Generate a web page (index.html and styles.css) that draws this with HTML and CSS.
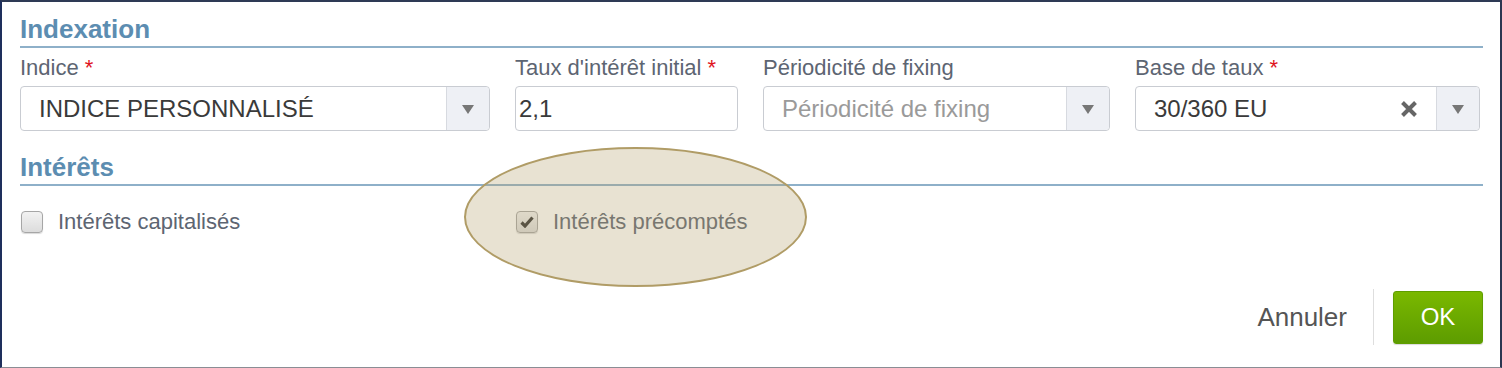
FILE: index.html
```html
<!DOCTYPE html>
<html lang="fr">
<head>
<meta charset="utf-8">
<title>Indexation</title>
<link rel="stylesheet" href="styles.css">
</head>
<body>
<div class="frame">
  <section class="section">
    <h2 class="section-title">Indexation</h2>
    <div class="fields">
      <div class="field">
        <label class="label">Indice <span class="req">*</span></label>
        <div class="select">
          <span class="value">INDICE PERSONNALISÉ</span>
          <span class="arrow"><span class="tri"></span></span>
        </div>
      </div>
      <div class="field">
        <label class="label">Taux d'intérêt initial <span class="req">*</span></label>
        <div class="input"><span class="value">2,1</span></div>
      </div>
      <div class="field">
        <label class="label">Périodicité de fixing</label>
        <div class="select">
          <span class="value placeholder">Périodicité de fixing</span>
          <span class="arrow"><span class="tri"></span></span>
        </div>
      </div>
      <div class="field">
        <label class="label">Base de taux <span class="req">*</span></label>
        <div class="select">
          <span class="value">30/360 EU</span>
          <span class="clear">
            <svg width="18" height="18" viewBox="0 0 18 18"><path d="M2.5 2.5 L15.5 15.5 M15.5 2.5 L2.5 15.5" stroke="#666" stroke-width="4" stroke-linecap="butt"/></svg>
          </span>
          <span class="arrow"><span class="tri"></span></span>
        </div>
      </div>
    </div>
  </section>
  <section class="section second">
    <h2 class="section-title">Intérêts</h2>
    <div class="checks">
      <div class="check">
        <span class="box"></span>
        <span class="check-label">Intérêts capitalisés</span>
      </div>
      <div class="check">
        <span class="box checked">
          <svg width="14" height="12" viewBox="0 0 14 12"><path d="M1.5 6.5 L5 10 L12.5 1.5" fill="none" stroke="#333" stroke-width="3.2"/></svg>
        </span>
        <span class="check-label">Intérêts précomptés</span>
      </div>
    </div>
  </section>
  <div class="actions">
    <button class="btn-cancel">Annuler</button>
    <span class="sep"></span>
    <button class="btn-ok">OK</button>
  </div>
  <div class="highlight"></div>
</div>
</body>
</html>
```
FILE: styles.css
```css
html, body { margin: 0; padding: 0; background: #fff; }
body { font-family: "Liberation Sans", Arial, sans-serif; }
.frame {
  position: relative;
  box-sizing: border-box;
  width: 1502px;
  height: 368px;
  border-left: 2px solid #1e2f5c;
  border-right: 2px solid #2b3651;
  border-top: 2px solid #2e3a55;
  border-bottom: 1px solid #8a8d94;
  padding: 12px 17px 0 18px;
}
.section-title {
  margin: 0;
  font-size: 26px;
  font-weight: bold;
  color: #5c8db1;
  line-height: 30px;
  padding-bottom: 2px;
  border-bottom: 2px solid #8eb0c9;
  position: relative;
  z-index: 2;
}
.fields {
  display: grid;
  grid-template-columns: 470px 223px 347px 345px;
  column-gap: 25px;
  margin-top: 7px;
}
.label {
  display: block;
  font-size: 22px;
  color: #5d6572;
  line-height: 26px;
  margin-bottom: 5px;
}
.req { color: #e0141e; }
.select, .input {
  box-sizing: border-box;
  height: 45px;
  border: 1px solid #c9ccd2;
  border-radius: 4px;
  display: flex;
  align-items: center;
  background: #fff;
}
.value {
  flex: 1;
  font-size: 24px;
  color: #3a3a3a;
  padding-left: 18px;
  white-space: nowrap;
}
.input .value { padding-left: 3px; }
.placeholder { color: #9a9a9a; }
.arrow {
  width: 42px;
  align-self: stretch;
  background: #eef0f5;
  border-left: 1px solid #d7dae0;
  border-radius: 0 4px 4px 0;
  display: flex;
  align-items: center;
  justify-content: center;
}
.tri {
  width: 0; height: 0;
  border-left: 6px solid transparent;
  border-right: 6px solid transparent;
  border-top: 9px solid #777;
  margin-top: 2px;
}
.clear {
  width: 20px;
  margin-right: 16px;
  display: flex;
  align-items: center;
}
.second { margin-top: 21px; }
.checks {
  display: flex;
  margin-top: 23px;
  position: relative;
  z-index: 2;
}
.check {
  display: flex;
  align-items: center;
  width: 495px;
}
.box {
  box-sizing: border-box;
  width: 22px; height: 22px;
  border: 1px solid #a6a6a6;
  border-radius: 4px;
  background: linear-gradient(#f2f2f2, #dcdcdc);
  box-shadow: 0 1px 1px rgba(0,0,0,0.15);
  margin-left: 1px;
  margin-right: 15px;
  display: flex;
  align-items: center;
  justify-content: center;
}
.check-label {
  font-size: 22px;
  line-height: 26px;
  color: #5d6572;
}
.actions {
  position: absolute;
  right: 17px;
  bottom: 22px;
  display: flex;
  align-items: center;
}
.btn-cancel {
  font-family: inherit;
  font-size: 26px;
  color: #555;
  background: none;
  border: none;
  padding: 0;
  margin-right: 26px;
}
.sep {
  width: 1px;
  height: 56px;
  background: #dedede;
  margin-right: 19px;
}
.btn-ok {
  font-family: inherit;
  font-size: 24px;
  color: #fff;
  width: 90px;
  height: 53px;
  border: 1px solid #5f9e00;
  border-radius: 3px;
  background: linear-gradient(#7ab800, #5d9c00);
  box-shadow: 0 1px 1px rgba(0,0,0,0.15);
}
.highlight {
  position: absolute;
  left: 462px;
  top: 145px;
  width: 343px;
  height: 140px;
  box-sizing: border-box;
  border: 2px solid #b09c66;
  border-radius: 50%;
  background: rgba(180, 160, 110, 0.31);
  z-index: 3;
}
```
